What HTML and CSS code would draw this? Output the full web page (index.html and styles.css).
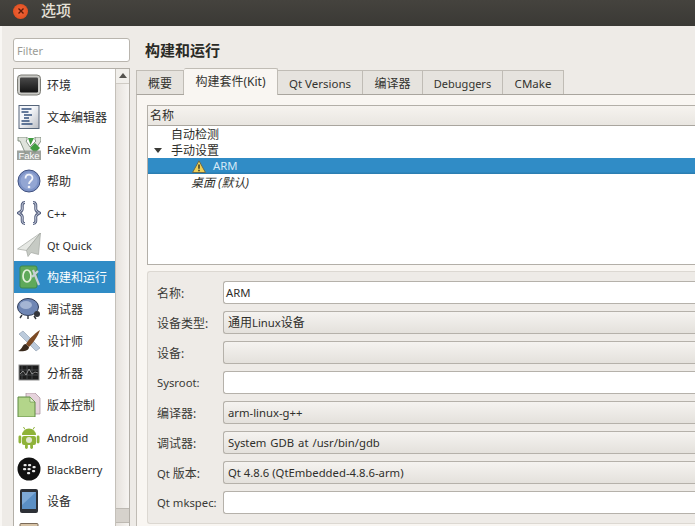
FILE: index.html
```html
<!DOCTYPE html>
<html lang="zh">
<head>
  <meta charset="UTF-8">
  <title>选项</title>
  <link rel="stylesheet" href="styles.css">
</head>
<body>
  <header class="titlebar">
    <span class="cerrar"><svg viewBox="0 0 8 8" width="8" height="8"><path d="M1.500 1.500l5 5M6.500 1.500l-5 5" stroke="#5a1a08" stroke-width="1.400"/></svg></span>
    <span class="titulo">选项</span>
  </header>
  <div class="ventana">
    <aside class="lateral">
      <div class="filtro">Filter</div>
      <div class="lista-caja">
        <ul class="lista">
          <li><svg class="ico" viewBox="0 0 24 24"><defs><linearGradient id="pantalla" x1="0" y1="0" x2="0" y2="1"><stop offset="0" stop-color="#4a4a4a"/><stop offset="1" stop-color="#141414"/></linearGradient></defs><rect x=".5" y="2" width="23" height="20" rx="3.500" fill="#c9c9c5" stroke="#7d7d76"/><rect x="3" y="4.500" width="18" height="15" rx="1" fill="url(#pantalla)"/></svg>环境</li>
          <li><svg class="ico" viewBox="0 0 24 24"><defs><linearGradient id="hoja" x1="0" y1="0" x2="1" y2="1"><stop offset=".4" stop-color="#f4f6fa"/><stop offset="1" stop-color="#b9bcc2"/></linearGradient></defs><rect x="2" y=".5" width="20" height="23" fill="url(#hoja)" stroke="#56657a"/><path d="M4.500 4h10M4.500 7h7M7 10h8M7 13h5M4.500 16h8M4.500 19h11" stroke="#33507c" stroke-width="1.300"/></svg>文本编辑器</li>
          <li><svg class="ico" viewBox="0 0 24 24"><path d="M1 0h9v3l-1 1 4 6 6-6-1-1V0h6v4L13 20h-3L3 4H1z" fill="#dfe3dc" stroke="#6f7d6d" stroke-width=".8"/><path d="M11 1h6l-3.500 7z" fill="#3f9c3f"/><path d="M18 6l5 5-5 5-5-5z" fill="#3f9c3f"/><rect x="0" y="13.500" width="24" height="9.500" fill="#8d938c" opacity=".85"/><text x="12" y="22" font-size="9.500" text-anchor="middle" fill="#fff" font-family="Liberation Sans">Fake</text></svg><span class="lat">FakeVim</span></li>
          <li><svg class="ico" viewBox="0 0 24 24"><circle cx="12" cy="12" r="11" fill="#7d93c7" stroke="#40517f"/><circle cx="12" cy="12" r="8.500" fill="#93a6d3"/><path d="M8.500 9.500c0-5 7-5 7-.5 0 3-3.500 3-3.500 6" fill="none" stroke="#f0f3fa" stroke-width="1.800"/><circle cx="12" cy="18" r="1.300" fill="#f0f3fa"/></svg>帮助</li>
          <li><svg class="ico" viewBox="0 0 24 24"><g fill="none"><path d="M8 1.500C3.500 1.500 6 7 5 9c-.5 1.500-2 2-3.500 3C3 13 4.500 13.500 5 15c1 2-1.500 7.500 3 7.500M16 1.500c4.500 0 2 5.500 3 7.500.5 1.500 2 2 3.500 3-1.500 1-3 1.500-3.500 3-1 2 1.500 7.500-3 7.500" stroke="#515c7c" stroke-width="3"/><path d="M8 1.500C3.500 1.500 6 7 5 9c-.5 1.500-2 2-3.500 3C3 13 4.500 13.500 5 15c1 2-1.500 7.500 3 7.500M16 1.500c4.500 0 2 5.500 3 7.500.5 1.500 2 2 3.500 3-1.500 1-3 1.500-3.500 3-1 2 1.500 7.500-3 7.500" stroke="#d6dbe8" stroke-width="1"/></g></svg><span class="lat">C++</span></li>
          <li><svg class="ico" viewBox="0 0 24 24"><path d="M23.500 0L.5 16l9 1.500z" fill="#e6e8e4" stroke="#a4a8a2" stroke-width=".7"/><path d="M23.500 0L9.500 17.500l1.500 6 3-4 7.500 2z" fill="#c6cac4" stroke="#a4a8a2" stroke-width=".7"/></svg><span class="lat">Qt Quick</span></li>
          <li class="activo"><svg class="ico" viewBox="0 0 24 24"><rect x="3" y="1" width="17" height="22" rx="2" fill="#5fa95a" stroke="#3f8a4a"/><ellipse cx="10" cy="11" rx="4" ry="6" fill="none" stroke="#e4f1dc" stroke-width="1.700"/><path d="M16 5l6 15M21 6l-6 6" stroke="#c8d0d6" stroke-width="2.200"/></svg>构建和运行</li>
          <li><svg class="ico" viewBox="0 0 24 24"><ellipse cx="11" cy="10" rx="10.500" ry="8.500" fill="#6f86b4" stroke="#2f3c57"/><ellipse cx="9" cy="8" rx="6" ry="4" fill="#a4b5d4"/><circle cx="20" cy="17" r="3" fill="#33353a"/><path d="M5 18l-2 3M11 19v3M17 19l2 3" stroke="#33353a" stroke-width="1.400"/></svg>调试器</li>
          <li><svg class="ico" viewBox="0 0 24 24"><path d="M2 5l4-3 17 17-4 3z" fill="#bccbdc" stroke="#8a99ab" stroke-width=".6"/><path d="M23 1C17 5 11 11 9 15l3 3C16 14 21 7 23 1z" fill="#7c4a24"/><path d="M9 15c-4 0-3 5-8 7 5 1 11 0 11-4z" fill="#3a2a1c"/></svg>设计师</li>
          <li><svg class="ico" viewBox="0 0 24 24"><rect x="2" y="4" width="20" height="15" fill="#1c1c1c" stroke="#8e8e8e"/><path d="M5 4v15M10 4v15M15 4v15M2 9h20M2 14h20" stroke="#55575a" stroke-width=".7"/><path d="M3 13l3-3 3 4 3-6 3 5 3-2 3 1" fill="none" stroke="#c9c9c9" stroke-width=".6"/></svg>分析器</li>
          <li><svg class="ico" viewBox="0 0 24 24"><path d="M9 0h9l5 5v16H9z" fill="#e6d3dc" stroke="#a58d98" stroke-width=".7"/><path d="M1 4h12l5 5v15H1z" fill="#b3d58a" stroke="#5f8a42"/><path d="M13 4v5h5z" fill="#e4f1d2" stroke="#5f8a42" stroke-width=".6"/></svg>版本控制</li>
          <li><svg class="ico" viewBox="0 0 24 24"><path d="M5 10a7 6.500 0 0 1 14 0z" fill="#8fb339"/><path d="M8 4.500L6.500 2M16 4.500L17.500 2" stroke="#8fb339"/><rect x="5" y="11" width="14" height="9" rx="2" fill="#8fb339"/><rect x="1.500" y="10.500" width="2.800" height="8" rx="1.400" fill="#8fb339"/><rect x="19.700" y="10.500" width="2.800" height="8" rx="1.400" fill="#8fb339"/><rect x="8" y="19" width="2.800" height="5" rx="1.400" fill="#8fb339"/><rect x="13.200" y="19" width="2.800" height="5" rx="1.400" fill="#8fb339"/><circle cx="12" cy="15" r="3" fill="#dfe6cf"/></svg><span class="lat">Android</span></li>
          <li><svg class="ico" viewBox="0 0 24 24"><circle cx="12" cy="12" r="11.500" fill="#111"/><g fill="#e8e8e8"><rect x="6.500" y="7" width="3.200" height="2.200" rx="1"/><rect x="11" y="7" width="3.200" height="2.200" rx="1"/><rect x="6" y="11" width="3.200" height="2.200" rx="1"/><rect x="10.500" y="11" width="3.200" height="2.200" rx="1"/><rect x="15.500" y="9" width="3.200" height="2.200" rx="1"/><rect x="15" y="13" width="3.200" height="2.200" rx="1"/><rect x="10" y="15" width="3.200" height="2.200" rx="1"/></g></svg><span class="lat">BlackBerry</span></li>
          <li><svg class="ico" viewBox="0 0 24 24"><rect x="3" y="0" width="18" height="24" rx="2" fill="#2d3036"/><rect x="5" y="3" width="14" height="17" fill="#5b8fc4"/><path d="M5 3h14L5 16z" fill="#7ea9d6"/></svg>设备</li>
          <li><svg class="ico" viewBox="0 0 24 24"><rect x="3" y="2.500" width="18" height="22" rx="1" fill="#d7c3a6" stroke="#7a6a58"/></svg></li>
        </ul>
        <div class="scroll">
          <div class="flecha"></div>
          <div class="pista"></div>
          <div class="tope"></div>
        </div>
      </div>
    </aside>
    <main class="principal">
      <h1>构建和运行</h1>
      <nav class="tabs">
        <span class="tab t1">概要</span>
        <span class="tab t2 activa">构建套件(Kit)</span>
        <span class="tab t3">Qt Versions</span>
        <span class="tab t4">编译器</span>
        <span class="tab t5">Debuggers</span>
        <span class="tab t6">CMake</span>
      </nav>
      <section class="panel">
        <div class="arbol">
          <div class="arbol-cab">名称</div>
          <div class="fila n1">自动检测</div>
          <div class="fila n1"><span class="tri"></span>手动设置</div>
          <div class="fila n2 sel"><svg class="aviso" viewBox="0 0 14 13" width="14" height="13"><path d="M7 .8L13.500 12.500H.5z" fill="#efcf55" stroke="#6b6a4a"/><path d="M7 4.500v4.300M7 9.800v1.500" stroke="#2b2b22" stroke-width="1.400"/></svg><span class="lat">ARM</span></div>
          <div class="fila n3"><i>桌面 (默认)</i></div>
        </div>
        <div class="detalle">
          <div class="campo"><label>名称:</label><div class="valor blanco"><span class="lat">ARM</span></div></div>
          <div class="campo"><label>设备类型:</label><div class="valor combo">通用<span class="lat">Linux</span>设备</div></div>
          <div class="campo"><label>设备:</label><div class="valor combo"></div></div>
          <div class="campo"><label class="lat">Sysroot:</label><div class="valor blanco"></div></div>
          <div class="campo"><label>编译器:</label><div class="valor combo"><span class="lat">arm-linux-g++</span></div></div>
          <div class="campo"><label>调试器:</label><div class="valor combo"><span class="lat gdb">System GDB at /usr/bin/gdb</span></div></div>
          <div class="campo"><label><span class="lat">Qt </span>版本:</label><div class="valor combo"><span class="lat">Qt 4.8.6 (QtEmbedded-4.8.6-arm)</span></div></div>
          <div class="campo"><label class="lat">Qt mkspec:</label><div class="valor blanco"></div></div>
        </div>
      </section>
    </main>
  </div>
</body>
</html>
```

FILE: styles.css
```css
:root {
  --fondo: #eeebe7;
  --borde: #b3afa8;
  --azul: #308cc6;
  --texto: #2f2f2b;
}
html, body {
  margin: 0;
  padding: 0;
  height: 526px;
  overflow: hidden;
  background: var(--fondo);
  color: var(--texto);
  font-family: "Noto Sans", "Noto Sans CJK SC", sans-serif;
  font-size: 12px;
}
.lat {
  font-size: 11.300px;
}
.gdb {
  word-spacing: 1px;
}
.titlebar {
  height: 26px;
  background: linear-gradient(#45433e, #3a3935);
  display: flex;
  align-items: center;
  padding-left: 13px;
  gap: 13px;
  color: #e6e2d9;
  box-sizing: border-box;
  padding-bottom: 4px;
}
.cerrar {
  width: 15px;
  height: 15px;
  border-radius: 50%;
  background: radial-gradient(#f0663f, #dd4814);
  display: flex;
  align-items: center;
  justify-content: center;
}
.titulo {
  font-size: 15px;
  font-weight: 500;
  margin-top: -3px;
}
.ventana {
  display: flex;
  height: 500px;
  border-left: 2px solid #f9f7f4;
}
.lateral {
  width: 117px;
  margin-left: 11px;
  padding-top: 12px;
  display: flex;
  flex-direction: column;
  flex: none;
}
.filtro {
  height: 24px;
  line-height: 23px;
  box-sizing: border-box;
  background: #fff;
  border: 1px solid #b9b5ae;
  border-radius: 3px;
  padding-left: 3px;
  color: #9b9b96;
  font-size: 11px;
}
.lista-caja {
  margin-top: 6px;
  flex: 1;
  display: flex;
  background: #fff;
  border: 1px solid var(--borde);
  border-bottom: none;
  min-height: 0;
  overflow: hidden;
}
.lista {
  list-style: none;
  margin: 0;
  padding: 0;
  flex: 1;
  min-width: 0;
}
.lista li {
  height: 32px;
  display: flex;
  align-items: center;
  gap: 6px;
  padding-left: 3px;
  color: #2c2c2c;
}
.lista li .lat {
  font-size: 11px;
}
.lista li.activo {
  background: var(--azul);
  color: #fff;
}
.ico {
  width: 24px;
  height: 24px;
  flex: none;
}
.scroll {
  width: 13px;
  border-left: 1px solid #c4c0b9;
  background: linear-gradient(90deg, #e6e2dd, #f6f4f1);
  display: flex;
  flex-direction: column;
}
.flecha {
  height: 14px;
  border-bottom: 1px solid #cfcbc4;
  background: #f1efeb;
  position: relative;
}
.flecha::after {
  content: "";
  position: absolute;
  left: 3px;
  top: 4px;
  border: 4px solid transparent;
  border-top: none;
  border-bottom: 5px solid #55534e;
}
.pista {
  height: 424px;
}
.tope {
  height: 13px;
  background: #d6d2cc;
  border-top: 1px solid #bdb9b2;
  border-bottom: 1px solid #bdb9b2;
}
.principal {
  flex: 1;
  min-width: 0;
  margin-left: 6px;
}
h1 {
  margin: 0;
  padding: 14px 0 0 9px;
  height: 27px;
  font-size: 15px;
  line-height: 20px;
  font-weight: 700;
  color: #2a2a26;
}
.tabs {
  display: flex;
  align-items: flex-end;
  height: 27px;
  box-sizing: border-box;
}
.tab {
  height: 24px;
  line-height: 25px;
  box-sizing: border-box;
  text-align: center;
  background: #e6e3de;
  border: 1px solid #c0bcb5;
  border-left: none;
  border-bottom: none;
  font-size: 11.500px;
  color: #33332f;
}
.t1 { width: 48px; border-left: 1px solid #c0bcb5; font-size: 12px; }
.t2 { width: 94px; font-size: 12px; }
.t3 { width: 85px; }
.t4 { width: 60px; font-size: 12px; }
.t5 { width: 80px; font-size: 11px; }
.t6 { width: 61px; }
.tab.activa {
  height: 27px;
  line-height: 26px;
  margin-bottom: -1px;
  background: #f9f6f2;
  border-radius: 2px 2px 0 0;
  position: relative;
  z-index: 1;
}
.panel {
  background: #f9f6f2;
  border-top: 1px solid #a9a59e;
  border-left: 1px solid #c0bcb5;
  padding: 10px 0 0 10px;
  height: 433px;
  box-sizing: border-box;
}
.arbol {
  height: 160px;
  box-sizing: border-box;
  background: #fff;
  border: 1px solid var(--borde);
  border-right: none;
}
.arbol-cab {
  height: 20px;
  line-height: 19px;
  box-sizing: border-box;
  padding-left: 2px;
  background: linear-gradient(#f6f3ef, #e9e6e1);
  border-bottom: 1px solid #a9a59e;
}
.fila {
  height: 16px;
  line-height: 18px;
  position: relative;
  white-space: nowrap;
}
.n1 { padding-left: 23px; }
.n2 { padding-left: 44px; display: flex; align-items: center; gap: 7px; line-height: 16px; }
.n3 { padding-left: 43px; }
.sel {
  background: linear-gradient(#308cc6 85%, #2a7aad);
  color: #d5e9f6;
}
.tri {
  position: absolute;
  left: 6px;
  top: 6px;
  border: 4px solid transparent;
  border-bottom: none;
  border-top: 5px solid #3b3b37;
}
.detalle {
  margin-top: 6px;
  height: 253px;
  box-sizing: border-box;
  background: var(--fondo);
  border: 1px solid #dcd8d2;
  border-right: none;
  border-radius: 3px 0 0 3px;
  padding: 9px 0 0 9px;
  display: flex;
  flex-direction: column;
  gap: 7px;
}
.campo {
  display: flex;
  align-items: center;
  height: 23px;
}
.campo label {
  width: 66px;
  flex: none;
  color: #3a3a36;
}
.valor {
  flex: 1;
  height: 23px;
  line-height: 21px;
  box-sizing: border-box;
  border: 1px solid #b5b1aa;
  border-right: none;
  border-radius: 3px 0 0 3px;
  padding-left: 2px;
}
.blanco {
  background: #fff;
}
.combo {
  background: linear-gradient(#f5f3f0, #e4e1dc);
  padding-left: 4px;
}
```
